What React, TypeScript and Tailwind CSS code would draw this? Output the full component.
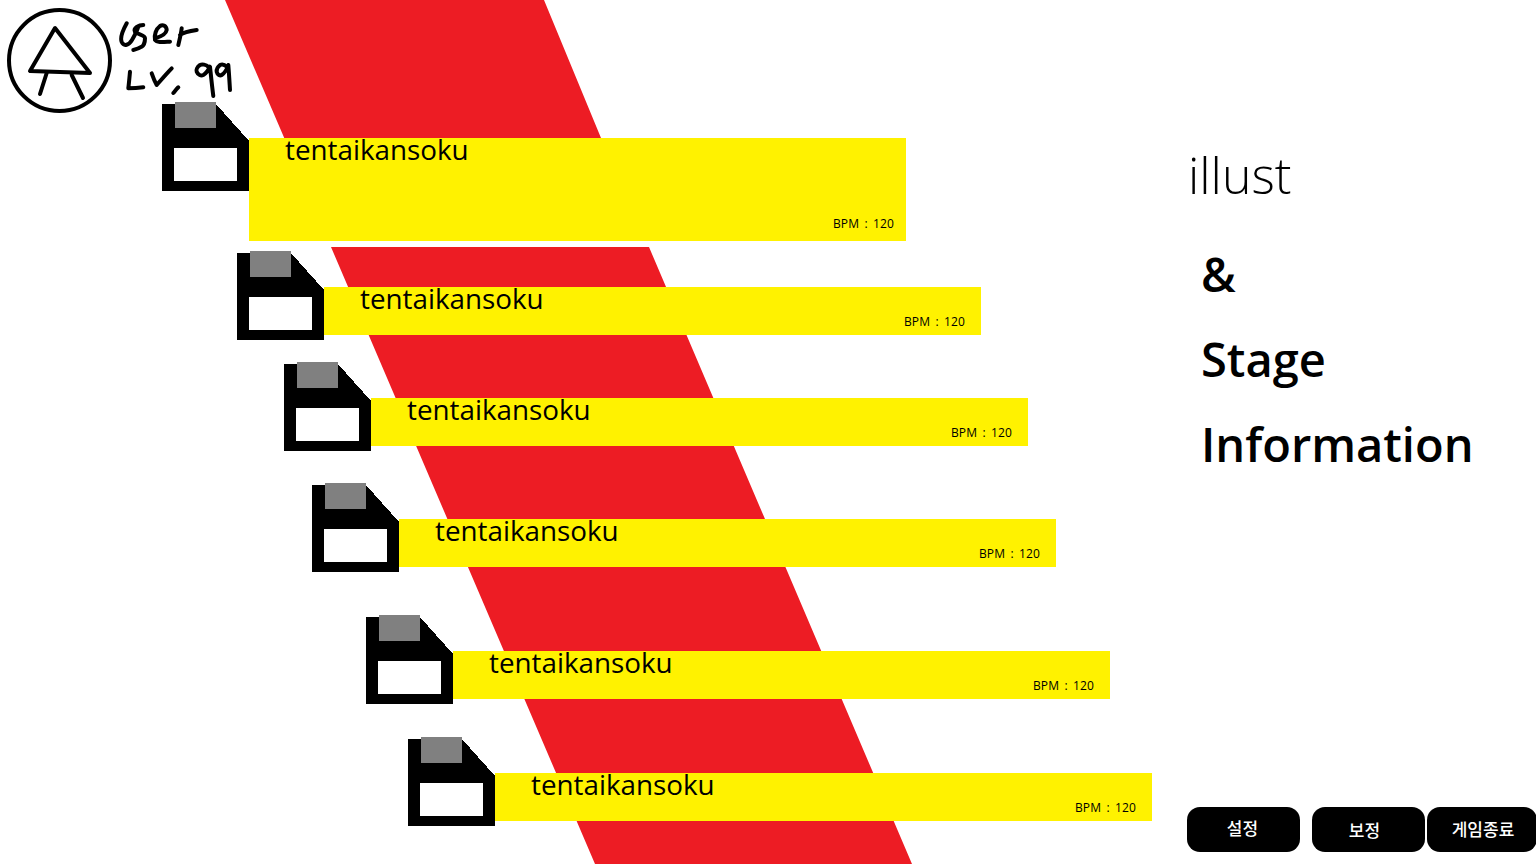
const rows = [
  { shift: "ml-[162px]", gap: "mt-[102px]", bar: "h-[103px]", bpm: "bottom-[9px] right-[12px]" },
  { shift: "ml-[237px]", gap: "mt-[10px]", bar: "h-[48px]", bpm: "bottom-[5px] right-[16px]" },
  { shift: "ml-[284px]", gap: "mt-[22px]", bar: "h-[48px]", bpm: "bottom-[5px] right-[16px]" },
  { shift: "ml-[312px]", gap: "mt-[32px]", bar: "h-[48px]", bpm: "bottom-[5px] right-[16px]" },
  { shift: "ml-[366px]", gap: "mt-[43px]", bar: "h-[48px]", bpm: "bottom-[5px] right-[16px]" },
  { shift: "ml-[408px]", gap: "mt-[33px]", bar: "h-[48px]", bpm: "bottom-[5px] right-[16px]" },
]

const buttons = [
  { label: "설정", width: "w-[113px]", text: "pb-[2px] pr-[2px]", gap: "" },
  { label: "보정", width: "w-[113px]", text: "pt-[3px] pr-[8px]", gap: "ml-[12px]" },
  { label: "게임종료", width: "w-[110px]", text: "pl-[2px] pt-[1px]", gap: "ml-[2px]" },
]

function FloppyIcon() {
  return (
    <svg width="87" height="89" viewBox="0 0 87 89" className="shrink-0" shapeRendering="crispEdges">
      <path d="M0 2H54L87 39V89H0Z" fill="#000" />
      <rect x="13" y="0" width="41" height="26" fill="#808080" />
      <rect x="12" y="46" width="63" height="33" fill="#fff" />
    </svg>
  )
}

function Avatar() {
  return (
    <svg width="105" height="105" viewBox="0 0 105 105" fill="none" stroke="#000" strokeWidth="4" strokeLinecap="round" strokeLinejoin="round">
      <circle cx="52.5" cy="52.5" r="50.5" />
      <path d="M48 20L23 63L83 65Z" />
      <path d="M39.7 65L33 86M64.7 67L76 90" />
    </svg>
  )
}

function UserScribble() {
  return (
    <svg width="118" height="86" viewBox="0 0 118 86" fill="none" stroke="#000" strokeWidth="4" strokeLinecap="round" strokeLinejoin="round">
      <path d="M8.7 10.3C5 17 2 25 3.7 29C6 34 11 32 14 27C17 22 19 18 20.3 13.7" />
      <path d="M25.3 12C21 12 15 15 17 18.7C20 22 27 22 27 25.3C27 30 25 33 23.7 33.7C21 35.5 18 36.5 15.3 37" />
      <path d="M37 25.3C42 24 48 21 48.7 17C48.5 13 45 11 42 13C38 16 36 22 37 27C39 30 46 29 52 28.7" />
      <path d="M63.7 15.3C63 21 61.5 27 60.3 32M62 22C66 19 72 18 78.7 17" />
      <path d="M12 58.7C11.5 64 11 70 10.3 75.3C15 75.3 20 75 25.3 74.3" />
      <path d="M33.7 60.3C35 64 37 69 38.7 72C43 67 49 60 53.7 55.3" />
      <path d="M60.3 74.3C58.5 76 57 78 55.3 80" />
      <path d="M90.3 53.7C88 51.5 84 51 82 52C79 54 78 57 78.7 58.7C80 62 83 63 85.3 62C88 60.5 90.5 57 92 53.7C93 63 94 73 95.3 83" />
      <path d="M108.7 53.7C106.5 51.5 104 51 102 52C99.5 54 98.5 57 98.7 58.7C99.5 62 102 63 103.7 62C106 60.5 109 56 110.3 52C111 60 111.5 69 112 77" />
    </svg>
  )
}

export default function App() {
  return (
    <div className="relative h-[864px] w-[1536px] overflow-hidden bg-white font-['Open_Sans','Noto_Sans_CJK_KR',sans-serif] text-black">
      <svg width="1536" height="864" viewBox="0 0 1536 864" className="absolute inset-0">
        <polygon points="225,0 544,0 601,138 649,247 912,864 595,864 331,247" fill="#ed1c24" />
        <rect x="0" y="241" width="900" height="6" fill="#fff" />
      </svg>

      <div className="absolute left-[7px] top-[8px] flex">
        <Avatar />
        <div className="ml-[6px] mt-[5px]">
          <UserScribble />
        </div>
      </div>

      <div className="relative flex w-[1152px] flex-col">
        {rows.map((row, index) => (
          <div key={index} className={`flex items-start ${row.shift} ${row.gap}`}>
            <FloppyIcon />
            <div className={`relative mt-[36px] w-[657px] bg-[#fff200] ${row.bar}`}>
              <p className="ml-[36px] mt-[-6px] text-[27.8px] leading-[34px]">tentaikansoku</p>
              <p className={`absolute text-[12px] leading-[16px] [word-spacing:2px] tracking-[0.15px] ${row.bpm}`}>BPM : 120</p>
            </div>
          </div>
        ))}
      </div>

      <div className="absolute left-[1188px] top-[145px]">
        <p className="text-[50px] font-light leading-[60px]">illust</p>
        <div className="ml-[13px] mt-[27px] text-[47px] font-semibold leading-[85px]">
          <p>&amp;</p>
          <p>Stage</p>
          <p>Information</p>
        </div>
      </div>

      <div className="absolute bottom-[12px] left-[1187px] flex">
        {buttons.map((button) => (
          <div
            key={button.label}
            className={`flex h-[45px] items-center justify-center rounded-[13px] bg-black text-[17px] font-medium text-white ${button.width} ${button.gap} ${button.text}`}
          >
            {button.label}
          </div>
        ))}
      </div>
    </div>
  )
}
